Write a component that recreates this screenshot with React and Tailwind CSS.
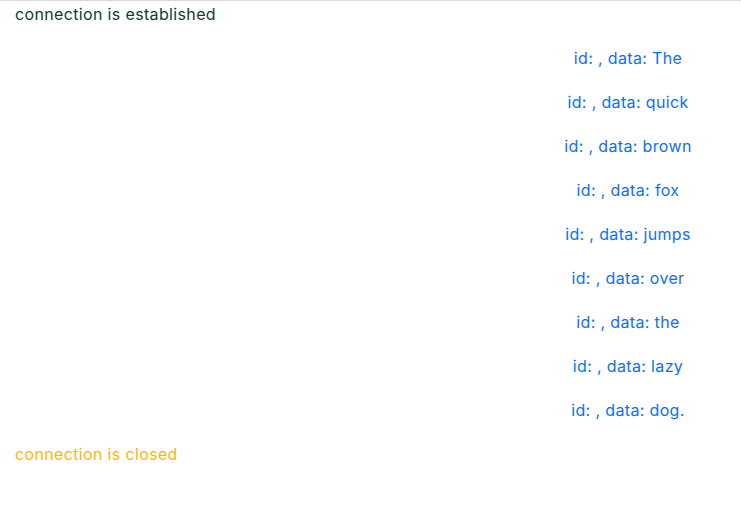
export default function App() {
  const words = ["The", "quick", "brown", "fox", "jumps", "over", "the", "lazy", "dog."];
  return (
    <div className="min-h-[523px] w-[741px] bg-white border-t border-[#d9d9d9] text-[16px] leading-[24px] tracking-[0.35px] font-['Inter','Liberation_Sans',sans-serif]">
      <div className="flex flex-col pt-[1px]">
        <div className="h-[44px] px-[15px] text-[#0f3d2c]">connection is established</div>
        {words.map((w) => (
          <div key={w} className="h-[44px] flex justify-end">
            <div className="w-[226px] text-center text-[#0d6efd]">id: , data: {w}</div>
          </div>
        ))}
        <div className="h-[44px] px-[15px] text-[#ffb700]">connection is closed</div>
      </div>
    </div>
  );
}
